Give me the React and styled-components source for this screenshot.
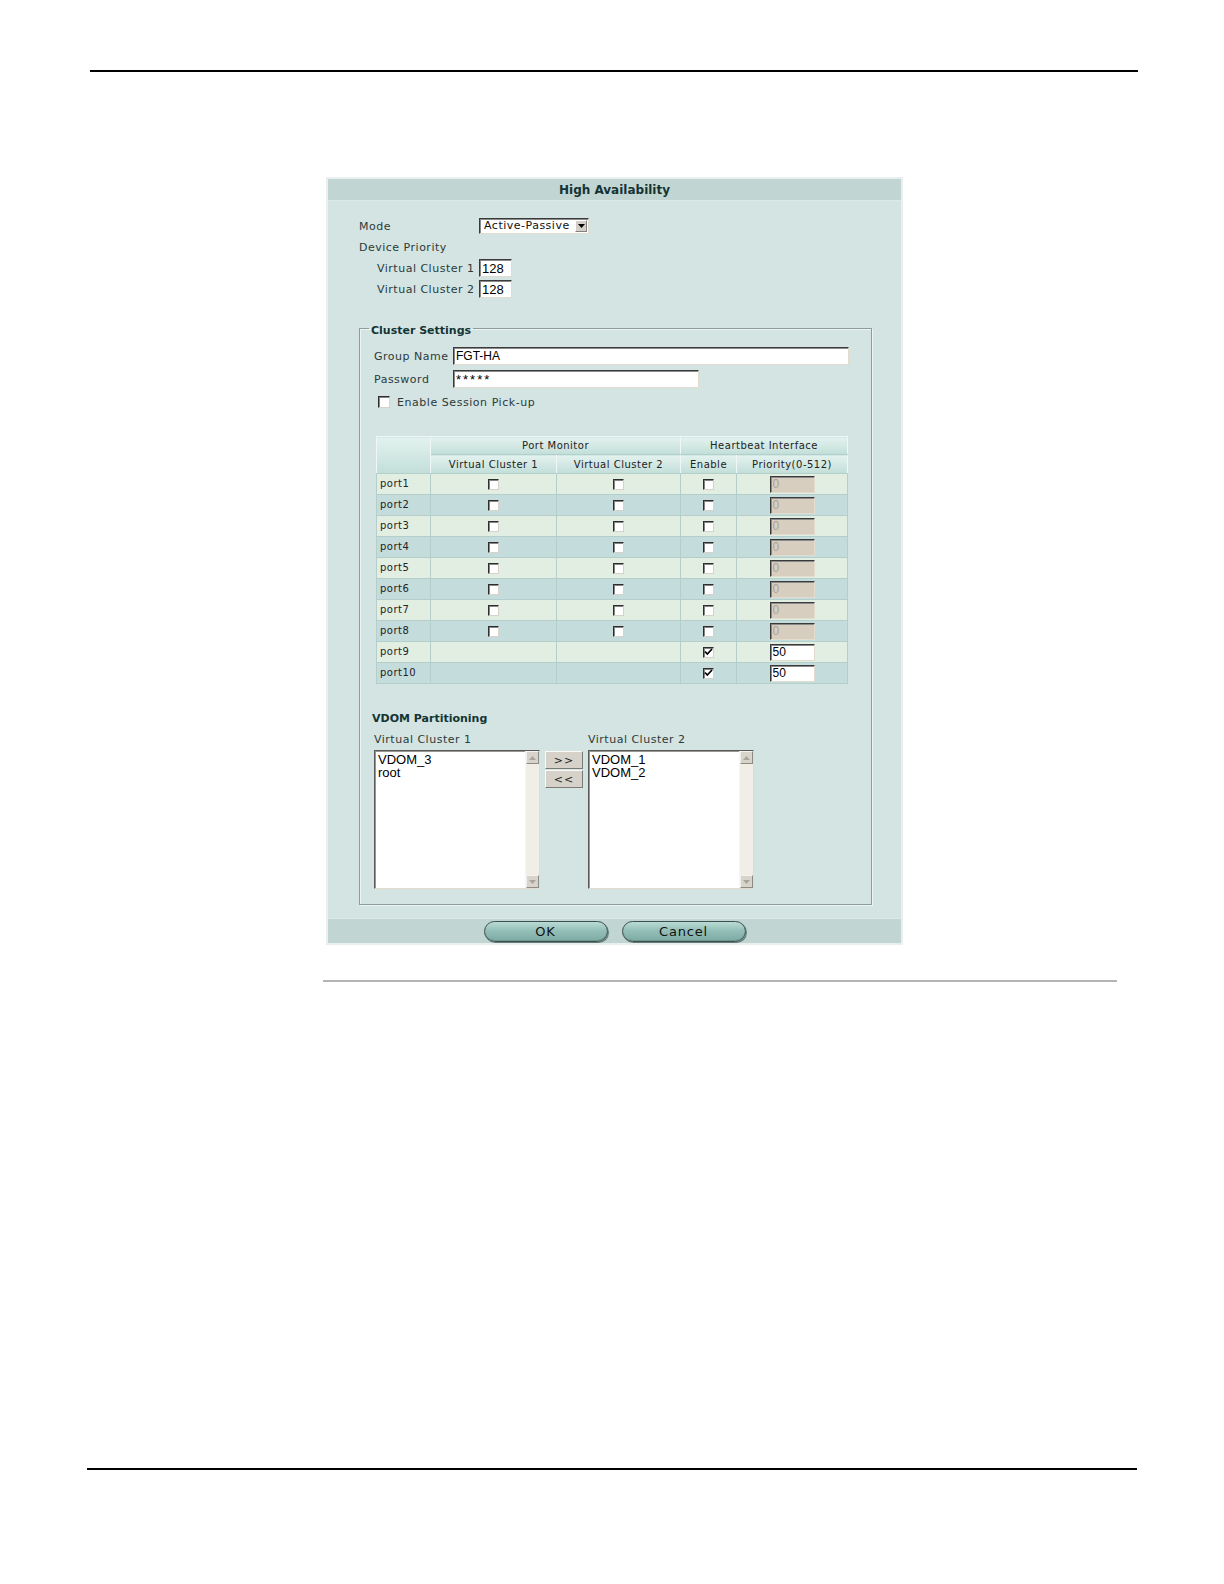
import React from 'react'
import styled, { createGlobalStyle } from 'styled-components'

const GlobalStyle = createGlobalStyle`
  body {
    margin: 0;
    background: #fff;
    font-family: "DejaVu Sans", Verdana, sans-serif;
  }
`

//page frame with the printed rules
const Page = styled.div`
  padding: 70px 0 100px;
`

const Rule = styled.div`
  height: 2px;
  width: ${(p) => p.$w}px;
  margin-left: ${(p) => p.$x}px;
  margin-top: ${(p) => p.$top || 0}px;
  background: ${(p) => p.$color || '#000'};
`

//the dialog itself
const Dialog = styled.div`
  width: 577px;
  box-sizing: border-box;
  margin: 105px 0 0 326px;
  border: 2px solid #e8efee;
  background: #d3e4e2;
`

const TitleBar = styled.div`
  height: 21px;
  line-height: 23px;
  text-align: center;
  background: #c1d5d3;
  border-bottom: 1px solid #dde9e7;
  font-size: 12px;
  font-weight: bold;
  color: #143434;
`

const Body = styled.div`
  padding: 16px 29px 13px 31px;
`

const TopGrid = styled.div`
  display: grid;
  grid-template-columns: 120px auto;
  grid-auto-rows: 18px;
  row-gap: 3px;
  align-items: center;
  font-size: 11px;
  letter-spacing: 0.5px;
  color: #2c3a3a;
`

const Label = styled.span`
  padding-left: ${(p) => (p.$indent ? 18 : 0)}px;
  white-space: nowrap;
`

const SelectBox = styled.div`
  display: flex;
  width: 110px;
  height: 16px;
  box-sizing: border-box;
  background: #fff;
  border: 1px solid;
  border-color: #3a3a3a #e2dccf #e2dccf #3a3a3a;
  box-shadow: inset 1px 1px 0 #8a8a8a;
  font-size: 11px;
  line-height: 14px;
  letter-spacing: 0.5px;
  color: #111;
`

const SelectText = styled.span`
  flex: 1;
  padding-left: 4px;
`

const SelectArrow = styled.span`
  width: 12px;
  margin: 1px 1px 1px 0;
  background: #d4d0c8;
  border: 1px solid;
  border-color: #fff #808080 #808080 #fff;
  box-sizing: border-box;
  display: flex;
  align-items: center;
  justify-content: center;
`

const TextInput = styled.input`
  width: ${(p) => p.$w}px;
  height: ${(p) => p.$h || 18}px;
  box-sizing: border-box;
  margin: 0;
  padding: 0 2px;
  border: 1px solid;
  border-color: #3a3a3a #e2dccf #e2dccf #3a3a3a;
  box-shadow: inset 1px 1px 0 #8a8a8a;
  outline: none;
  background: ${(p) => (p.$off ? '#d7cec0' : '#fff')};
  color: ${(p) => (p.$off ? '#a9a397' : '#000')};
  font-family: "Liberation Sans", Arial, sans-serif;
  font-size: ${(p) => p.$fs || 13}px;
  letter-spacing: ${(p) => p.$ls || 0}px;
`

//cluster settings group
const Group = styled.fieldset`
  margin: 20px 0 0;
  padding: 9px 23px 15px 14px;
  min-width: 0;
  border: 1px solid #8d9d9b;
  box-shadow: inset 1px 1px 0 #edf5f4, 1px 1px 0 #edf5f4;
`

const Legend = styled.legend`
  margin-left: -5px;
  padding: 6px 2px 0;
  font-size: 11px;
  font-weight: bold;
  line-height: 14px;
  color: #143434;
`

const FieldRow = styled.div`
  display: grid;
  grid-template-columns: 79px auto;
  align-items: center;
  height: 18px;
  margin-top: ${(p) => p.$mt || 0}px;
  font-size: 11px;
  letter-spacing: 0.5px;
  color: #2c3a3a;
`

const CheckRow = styled.label`
  display: flex;
  align-items: center;
  gap: 7px;
  height: 18px;
  margin: 5px 0 0 4px;
  font-size: 11px;
  letter-spacing: 0.55px;
  color: #2c3a3a;
`

const Box = styled.span`
  display: inline-flex;
  align-items: center;
  justify-content: center;
  width: ${(p) => p.$s || 11}px;
  height: ${(p) => p.$s || 11}px;
  box-sizing: border-box;
  background: #fff;
  border: 1px solid;
  border-color: #2e2e2e #d6d2ca #d6d2ca #2e2e2e;
  box-shadow: inset 1px 1px 0 #858585;
  vertical-align: middle;
`

//port monitor / heartbeat table
const Table = styled.table`
  width: 471px;
  margin: 25px 0 0 2px;
  border-collapse: collapse;
  table-layout: fixed;
  border: 1px solid #a6c4c0;
  font-size: 10px;
  letter-spacing: 0.5px;
  color: #222;
`

const Th = styled.th`
  height: ${(p) => p.$h}px;
  padding: 0;
  font-weight: normal;
  background: linear-gradient(#e3f2ef, #c2ded8);
  border: 1px solid #eef7f5;
  border-bottom-color: #b3d1cb;
`

const Td = styled.td`
  height: 20px;
  padding: 0 0 0 ${(p) => (p.$left ? 3 : 0)}px;
  text-align: ${(p) => (p.$left ? 'left' : 'center')};
  background: ${(p) => (p.$alt ? '#c5dcdc' : '#e2eee2')};
  border: 1px solid #b4cecb;
  line-height: 12px;
`

//vdom partitioning
const SubTitle = styled.div`
  margin: 28px 0 0 -2px;
  line-height: 14px;
  font-size: 11px;
  font-weight: bold;
  color: #143434;
`

const VdomGrid = styled.div`
  display: grid;
  grid-template-columns: 166px 38px 166px;
  grid-template-rows: 14px 139px;
  column-gap: 5px;
  row-gap: 3px;
  margin-top: 7px;
  font-size: 11px;
  letter-spacing: 0.5px;
  color: #2c3a3a;
`

const ListBox = styled.div`
  display: flex;
  height: 139px;
  box-sizing: border-box;
  background: #fff;
  border: 1px solid;
  border-color: #5a5a5a #e2dccf #e2dccf #5a5a5a;
  box-shadow: inset 1px 1px 0 #9a9690;
  grid-column: ${(p) => p.$col};
  letter-spacing: 0;
`

const ListItems = styled.div`
  flex: 1;
  padding: 2px 3px;
  font-family: "Liberation Sans", Arial, sans-serif;
  font-size: 13px;
  line-height: 13px;
  color: #000;
`

const ScrollBar = styled.div`
  width: 13px;
  display: flex;
  flex-direction: column;
  justify-content: space-between;
  background: #f1eee8;
  border-left: 1px solid #f7f5f1;
`

const ScrollBtn = styled.span`
  width: 13px;
  height: 13px;
  box-sizing: border-box;
  background: #d8d4cb;
  border: 1px solid;
  border-color: #f4f2ee #8e8a84 #8e8a84 #f4f2ee;
  display: flex;
  align-items: center;
  justify-content: center;
`

const MoveButtons = styled.div`
  display: flex;
  flex-direction: column;
  gap: 1px;
  padding-top: 1px;
`

const MoveBtn = styled.button`
  width: 38px;
  height: 18px;
  padding: 0;
  background: #d6d2c9;
  border: 1px solid;
  border-color: #fbfaf7 #7c7a75 #7c7a75 #fbfaf7;
  font-family: "DejaVu Sans", Verdana, sans-serif;
  font-size: 11px;
  letter-spacing: 1px;
  color: #222;
`

const Footer = styled.div`
  height: 24px;
  display: flex;
  justify-content: center;
  align-items: center;
  gap: 14px;
  background: #c1d5d3;
  border-top: 1px solid #dde9e7;
`

const PillButton = styled.button`
  width: 124px;
  height: 21px;
  padding: 0;
  border-radius: 11px;
  border: 1px solid #3e4e4c;
  background: linear-gradient(#b9dbd5, #94bfb8 45%, #7caaa3);
  box-shadow: 1px 1px 0 #617e7a, inset 0 -1px 0 #6a9891;
  font-family: "DejaVu Sans", Verdana, sans-serif;
  font-size: 13px;
  letter-spacing: 0.8px;
  line-height: 19px;
  color: #111;
`

const Tick = () => (
  <svg width="9" height="9" viewBox="0 0 9 9">
    <path d="M1 3.5 L3.3 6 L8 1" fill="none" stroke="#000" strokeWidth="1.7" />
  </svg>
)

const Tri = ({ down, color = '#000' }) => (
  <svg width="7" height="4" viewBox="0 0 7 4">
    <path d={down ? 'M0 0 H7 L3.5 4 Z' : 'M0 4 H7 L3.5 0 Z'} fill={color} />
  </svg>
)

const Check = ({ checked, size }) => <Box $s={size}>{checked && <Tick />}</Box>

const List = ({ col, items }) => (
  <ListBox $col={col}>
    <ListItems>
      {items.map((it) => (
        <div key={it}>{it}</div>
      ))}
    </ListItems>
    <ScrollBar>
      <ScrollBtn>
        <Tri color="#a9a59e" />
      </ScrollBtn>
      <ScrollBtn>
        <Tri down color="#a9a59e" />
      </ScrollBtn>
    </ScrollBar>
  </ListBox>
)

const ports = Array.from({ length: 10 }, (_, i) => ({
  name: `port${i + 1}`,
  monitor: i < 8,
  heartbeat: i >= 8
}))

const App = () => (
  <Page>
    <GlobalStyle />
    <Rule $x={90} $w={1048} />
    <Dialog>
      <TitleBar>High Availability</TitleBar>
      <Body>
        <TopGrid>
          <Label>Mode</Label>
          <SelectBox>
            <SelectText>Active-Passive</SelectText>
            <SelectArrow>
              <Tri down />
            </SelectArrow>
          </SelectBox>
          <Label>Device Priority</Label>
          <span />
          <Label $indent>Virtual Cluster 1</Label>
          <TextInput $w={33} defaultValue="128" />
          <Label $indent>Virtual Cluster 2</Label>
          <TextInput $w={33} defaultValue="128" />
        </TopGrid>

        <Group>
          <Legend>Cluster Settings</Legend>
          <FieldRow>
            <span>Group Name</span>
            <TextInput $w={396} $fs={12} defaultValue="FGT-HA" />
          </FieldRow>
          <FieldRow $mt={5}>
            <span>Password</span>
            <TextInput $w={246} $ls={2} defaultValue="*****" />
          </FieldRow>
          <CheckRow>
            <Check size={12} />
            Enable Session Pick-up
          </CheckRow>

          <Table>
            <colgroup>
              <col style={{ width: 54 }} />
              <col style={{ width: 126 }} />
              <col style={{ width: 124 }} />
              <col style={{ width: 56 }} />
              <col style={{ width: 111 }} />
            </colgroup>
            <thead>
              <tr>
                <Th $h={17} rowSpan={2} />
                <Th $h={17} colSpan={2}>Port Monitor</Th>
                <Th $h={17} colSpan={2}>Heartbeat Interface</Th>
              </tr>
              <tr>
                <Th $h={18}>Virtual Cluster 1</Th>
                <Th $h={18}>Virtual Cluster 2</Th>
                <Th $h={18}>Enable</Th>
                <Th $h={18}>Priority(0-512)</Th>
              </tr>
            </thead>
            <tbody>
              {ports.map((p, i) => (
                <tr key={p.name}>
                  <Td $left $alt={i % 2 === 1}>{p.name}</Td>
                  <Td $alt={i % 2 === 1}>{p.monitor && <Check />}</Td>
                  <Td $alt={i % 2 === 1}>{p.monitor && <Check />}</Td>
                  <Td $alt={i % 2 === 1}>
                    <Check checked={p.heartbeat} />
                  </Td>
                  <Td $alt={i % 2 === 1}>
                    <TextInput
                      $w={45}
                      $h={17}
                      $fs={12}
                      $off={!p.heartbeat}
                      defaultValue={p.heartbeat ? '50' : '0'}
                    />
                  </Td>
                </tr>
              ))}
            </tbody>
          </Table>

          <SubTitle>VDOM Partitioning</SubTitle>
          <VdomGrid>
            <span>Virtual Cluster 1</span>
            <span />
            <span>Virtual Cluster 2</span>
            <List col={1} items={['VDOM_3', 'root']} />
            <MoveButtons>
              <MoveBtn>&gt;&gt;</MoveBtn>
              <MoveBtn>&lt;&lt;</MoveBtn>
            </MoveButtons>
            <List col={3} items={['VDOM_1', 'VDOM_2']} />
          </VdomGrid>
        </Group>
      </Body>
      <Footer>
        <PillButton>OK</PillButton>
        <PillButton>Cancel</PillButton>
      </Footer>
    </Dialog>
    <Rule $x={323} $w={794} $top={35} $color="#b4b4b4" />
    <Rule $x={87} $w={1050} $top={486} />
  </Page>
)

export default App
